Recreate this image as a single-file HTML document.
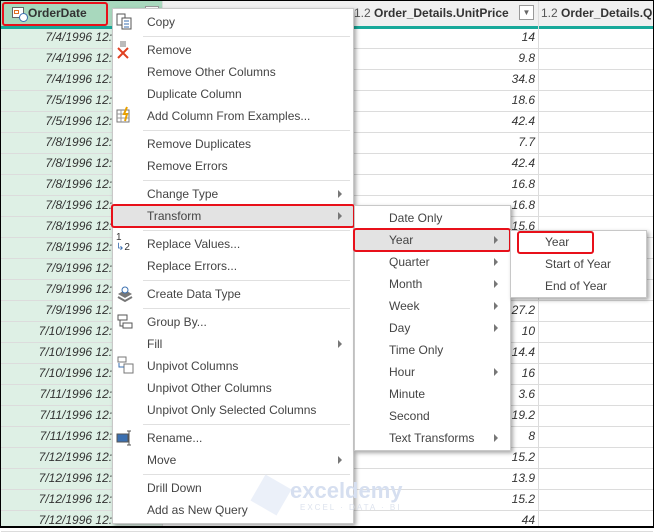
<!DOCTYPE html>
<html><head><meta charset="utf-8"><style>
*{margin:0;padding:0;box-sizing:border-box}
body{width:654px;height:528px;overflow:hidden;background:#fff;font-family:"Segoe UI","Liberation Sans",sans-serif;font-size:12px;color:#333;position:relative}
.a{position:absolute}
.hdr{top:1px;height:26px;background:#f0f0f0;border-bottom:1px solid #ddd}
.teal{top:26px;height:3px;background:#18a99a;left:1px;right:1px}
.row{left:1px;width:652px;height:1px;background:#dcdcdc}
.vl{top:1px;bottom:0;width:1px;background:#dcdcdc}
.d{font-style:italic;text-align:right;color:#333;white-space:nowrap}
.menu{background:#fff;border:1px solid #c8c8c8;box-shadow:2px 2px 4px rgba(0,0,0,.35)}
.it{position:absolute;height:22px;line-height:22px;color:#444;font-size:12px;white-space:nowrap}
.sep{position:absolute;height:1px;background:#e0e0e0}
.arr{position:absolute;width:0;height:0;border-left:4px solid #777;border-top:4px solid transparent;border-bottom:4px solid transparent}
.hl{position:absolute;background:#e3e3e3}
.red{position:absolute;border:2px solid #e8101a;border-radius:3px}
</style></head><body>
<div class="a hdr" style="left:1px;width:652px"></div>
<div class="a" style="left:1px;top:1px;width:161px;height:26px;background:#a8d8bd"></div>
<div class="a" style="left:1px;top:29px;width:161px;height:499px;background:#def0e5"></div>
<div class="a teal"></div>
<div class="a" style="left:12px;top:7px;width:12px;height:11px;border:1px solid #666;background:#fff"></div>
<div class="a" style="left:14px;top:10px;width:5px;height:4px;border:1px solid #e07020"></div>
<div class="a" style="left:19px;top:13px;width:9px;height:9px;border:1px solid #3a6fb0;border-radius:50%;background:#fff"></div>
<div class="a" style="left:28px;top:6px;font-weight:bold;font-size:12px;color:#333">OrderDate</div>
<div class="a" style="left:145px;top:6px;width:14px;height:13px;border:1px solid #999;background:#fff"></div>
<div class="red" style="left:2px;top:2px;width:106px;height:24px"></div>
<div class="a vl" style="left:162px"></div>
<div class="a vl" style="left:538px"></div>
<div class="a" style="left:354px;top:6px;color:#555">1.2 <b style="color:#333">Order_Details.UnitPrice</b></div>
<div class="a" style="left:519px;top:5px;width:15px;height:15px;border:1px solid #999;background:#fff;font-size:8px;text-align:center;line-height:13px;color:#666">▼</div>
<div class="a" style="left:541px;top:6px;color:#555;white-space:nowrap">1.2 <b style="color:#333">Order_Details.Qua</b></div>
<div id="rows"></div>
<script>
var d=["7/4","7/4","7/4","7/5","7/5","7/8","7/8","7/8","7/8","7/8","7/8","7/9","7/9","7/9","7/10","7/10","7/10","7/11","7/11","7/11","7/12","7/12","7/12","7/12"];
var v=["14","9.8","34.8","18.6","42.4","7.7","42.4","16.8","16.8","15.6","","","","27.2","10","14.4","16","3.6","19.2","8","15.2","13.9","15.2","44"];
var h="";
for(var i=0;i<24;i++){var y=27+21*i;
h+='<div class="a row" style="top:'+(y+21)+'px"></div>';
h+='<div class="a d" style="left:0;width:163px;top:'+(y+3)+'px">'+d[i]+'/1996 12:00:00 AM</div>';
h+='<div class="a d" style="left:380px;width:155px;top:'+(y+3)+'px">'+v[i]+'</div>';}
h+='<div class="a d" style="left:300px;width:50px;top:513px">33</div>';
document.getElementById('rows').innerHTML=h;
</script>
<div class="a" style="left:0;top:0;width:654px;height:528px;border:1px solid #000;border-bottom:2px solid #000;pointer-events:none"></div>

<div class="a menu" style="left:112px;top:8px;width:242px;height:516px"></div>
<div class="hl" style="left:113px;top:205px;width:240px;height:22px"></div>
<div class="red" style="left:111px;top:204px;width:244px;height:24px"></div>
<div class="a menu" style="left:354px;top:205px;width:157px;height:246px"></div>
<div class="hl" style="left:355px;top:229px;width:155px;height:22px"></div>
<div class="red" style="left:353px;top:228px;width:158px;height:24px"></div>
<div class="a menu" style="left:510px;top:230px;width:137px;height:68px"></div>
<div class="red" style="left:517px;top:231px;width:77px;height:23px"></div>
<div class="it" style="left:545px;top:231px">Year</div>
<div class="it" style="left:545px;top:253px">Start of Year</div>
<div class="it" style="left:545px;top:275px">End of Year</div>
<div id="m"></div>
<script>
var m=[["Copy",22],["Remove",50],["Remove Other Columns",72],["Duplicate Column",94],["Add Column From Examples...",116],["Remove Duplicates",144],["Remove Errors",166],["Change Type",194,1],["Transform",216,1],["Replace Values...",244],["Replace Errors...",266],["Create Data Type",294],["Group By...",322],["Fill",344,1],["Unpivot Columns",366],["Unpivot Other Columns",388],["Unpivot Only Selected Columns",410],["Rename...",438],["Move",460,1],["Drill Down",488],["Add as New Query",510]];
var s=[36,130,180,230,280,308,424,474];
var h="";
m.forEach(function(e){h+='<div class="it" style="left:147px;top:'+(e[1]-11)+'px">'+e[0]+'</div>';if(e[2])h+='<div class="arr" style="left:338px;top:'+(e[1]-4)+'px"></div>';});
s.forEach(function(y){h+='<div class="sep" style="left:143px;top:'+y+'px;width:207px"></div>';});
var sm=[["Date Only",218],["Year",240,1],["Quarter",262,1],["Month",284,1],["Week",306,1],["Day",328,1],["Time Only",350],["Hour",372,1],["Minute",394],["Second",416],["Text Transforms",438,1]];
sm.forEach(function(e){h+='<div class="it" style="left:389px;top:'+(e[1]-11)+'px">'+e[0]+'</div>';if(e[2])h+='<div class="arr" style="left:494px;top:'+(e[1]-4)+'px"></div>';});
document.getElementById('m').innerHTML=h;
</script>
<svg class="a" style="left:115px;top:12px" width="20" height="20"><rect x="2" y="2" width="8" height="11" fill="#fff" stroke="#555"/><rect x="7" y="6" width="9" height="11" fill="#fff" stroke="#555"/><path d="M9 9h5M9 12h5M9 15h5" stroke="#3a6fb0"/></svg>
<svg class="a" style="left:115px;top:40px" width="18" height="20"><rect x="5" y="1" width="6" height="6" fill="#bbb"/><path d="M3 8l10 10M13 8L3 18" stroke="#e04020" stroke-width="2"/></svg>
<svg class="a" style="left:115px;top:106px" width="18" height="18"><rect x="2" y="4" width="12" height="12" fill="#fff" stroke="#777"/><path d="M2 8h12M2 12h12M6 4v12" stroke="#999"/><path d="M12 1l-3 7h3l-2 7" stroke="#e8a000" stroke-width="2" fill="none"/></svg>
<div class="a" style="left:116px;top:233px;font-size:10px;color:#333;line-height:10px">1<br><span style="color:#3a6fb0">↳</span>2</div>
<svg class="a" style="left:116px;top:285px" width="18" height="18"><path d="M2 9l7-4 7 4-7 4z" fill="#777"/><path d="M2 12l7 4 7-4" stroke="#777" fill="none" stroke-width="2"/><circle cx="9" cy="5" r="3" fill="#fff" stroke="#3a6fb0"/></svg>
<svg class="a" style="left:116px;top:313px" width="18" height="18"><path d="M2 2h9v5H2zM7 10h9v5H7z" fill="#fff" stroke="#555"/><path d="M4 7v6h3" stroke="#555" fill="none"/></svg>
<svg class="a" style="left:116px;top:356px" width="18" height="18"><rect x="2" y="1" width="8" height="5" fill="#fff" stroke="#777"/><rect x="8" y="8" width="9" height="9" fill="#fff" stroke="#777"/><path d="M3 7v4h5" stroke="#3a6fb0" fill="none"/></svg>
<svg class="a" style="left:115px;top:429px" width="18" height="18"><rect x="2" y="5" width="11" height="8" fill="#3a6fb0" stroke="#555"/><path d="M14 2v14M12 2h4M12 16h4" stroke="#555"/></svg>
<div class="a" style="left:256px;top:480px;width:30px;height:30px;background:#e6ecf7;transform:rotate(30deg);opacity:.8"></div>
<div class="a" style="left:290px;top:478px;font-size:22px;font-weight:bold;color:#d6dff0">exceldemy</div>
<div class="a" style="left:300px;top:503px;font-size:8px;color:#dde3ee;letter-spacing:2px">EXCEL · DATA · BI</div>
</body></html>
